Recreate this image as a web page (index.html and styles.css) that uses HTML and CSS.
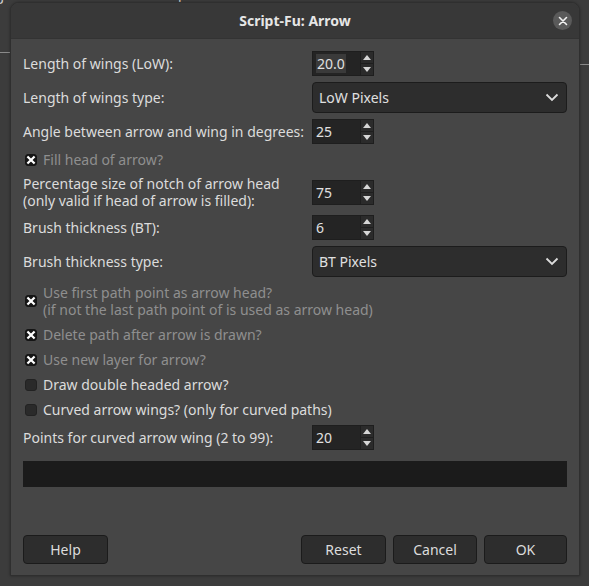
FILE: index.html
```html
<!DOCTYPE html>
<html>
<head>
<meta charset="utf-8">
<link rel="stylesheet" href="styles.css">
</head>
<body>
<div class="backdrop">
  <div class="menubar"><span class="m0">ıg</span><span class="m1">Filters</span><span class="m2">Windows</span><span>Help</span></div>
  <div class="tick tick-left"></div>
  <div class="tick tick-right"></div>
</div>
<div class="dialog">
  <div class="header">
    <div class="title">Script-Fu: Arrow</div>
    <div class="close">
      <svg width="10" height="10" viewBox="0 0 10 10"><path d="M1.5 1.5 L8.5 8.5 M8.5 1.5 L1.5 8.5" stroke="#f2f2f2" stroke-width="1.6" stroke-linecap="round"/></svg>
    </div>
  </div>
  <div class="content">
    <div class="form">
      <div class="label">Length of wings (LoW):</div>
      <div class="ctl"><div class="spin"><div class="entry"><span class="sel">20.0</span></div><div class="btns"><div class="b up"></div><div class="b down"></div></div></div></div>

      <div class="label">Length of wings type:</div>
      <div class="ctl"><div class="combo"><span>LoW Pixels</span><svg width="14" height="9" viewBox="0 0 14 9"><path d="M1.5 1.5 L7 7 L12.5 1.5" fill="none" stroke="#dcdcdc" stroke-width="1.8"/></svg></div></div>

      <div class="label">Angle between arrow and wing in degrees:</div>
      <div class="ctl"><div class="spin"><div class="entry">25</div><div class="btns"><div class="b up"></div><div class="b down"></div></div></div></div>

      <div class="check dim"><span class="box on"></span><span>Fill head of arrow?</span></div>

      <div class="label two"><div class="ln">Percentage size of notch of arrow head</div><div class="ln">(only valid if head of arrow is filled):</div></div>
      <div class="ctl"><div class="spin"><div class="entry">75</div><div class="btns"><div class="b up"></div><div class="b down"></div></div></div></div>

      <div class="label">Brush thickness (BT):</div>
      <div class="ctl"><div class="spin"><div class="entry">6</div><div class="btns"><div class="b up"></div><div class="b down"></div></div></div></div>

      <div class="label">Brush thickness type:</div>
      <div class="ctl"><div class="combo"><span>BT Pixels</span><svg width="14" height="9" viewBox="0 0 14 9"><path d="M1.5 1.5 L7 7 L12.5 1.5" fill="none" stroke="#dcdcdc" stroke-width="1.8"/></svg></div></div>

      <div class="check dim tall"><span class="box on"></span><span class="lines"><span class="ln">Use first path point as arrow head?</span><span class="ln">(if not the last path point of is used as arrow head)</span></span></div>
      <div class="check dim"><span class="box on"></span><span>Delete path after arrow is drawn?</span></div>
      <div class="check dim"><span class="box on"></span><span>Use new layer for arrow?</span></div>
      <div class="check"><span class="box"></span><span>Draw double headed arrow?</span></div>
      <div class="check"><span class="box"></span><span>Curved arrow wings? (only for curved paths)</span></div>

      <div class="label">Points for curved arrow wing (2 to 99):</div>
      <div class="ctl"><div class="spin"><div class="entry">20</div><div class="btns"><div class="b up"></div><div class="b down"></div></div></div></div>
    </div>
    <div class="progress"></div>
    <div class="actions">
      <div class="btn">Help</div>
      <div class="spacer"></div>
      <div class="btn">Reset</div>
      <div class="btn cancel">Cancel</div>
      <div class="btn ok">OK</div>
    </div>
  </div>
</div>
</body>
</html>
```
FILE: styles.css
```css
html, body {
  margin: 0;
  padding: 0;
}
body {
  width: 589px;
  height: 586px;
  overflow: hidden;
  background: #3c3c3c;
  font-family: "Noto Sans", "DejaVu Sans", sans-serif;
  font-size: 14px;
  color: #dcdcdc;
  position: relative;
}
.backdrop {
  position: absolute;
  left: 0;
  top: 0;
  width: 589px;
  height: 586px;
}
.menubar {
  position: absolute;
  left: -8px;
  top: -14px;
  display: flex;
  font-size: 14px;
  color: #cfcfcf;
  line-height: 18px;
}
.m0 { width: 34px; }
.m1 { width: 55px; }
.m2 { width: 75px; }
.tick {
  position: absolute;
  height: 1px;
  width: 10px;
  background: #8a8a8a;
}
.tick-left { left: 0; top: 52px; }
.tick-right { right: 0; top: 64px; width: 9px; }

.dialog {
  position: absolute;
  left: 10px;
  top: 2px;
  width: 568px;
  height: 572px;
  background: #464646;
  border: 1px solid #2f2f2f;
  border-radius: 9px 9px 0 0;
  display: flex;
  flex-direction: column;
  overflow: hidden;
  box-shadow: 0 0 3px rgba(0,0,0,0.35);
}
.header {
  height: 35px;
  flex: none;
  background: #383838;
  border-bottom: 1px solid #333;
  display: flex;
  align-items: center;
  justify-content: center;
  position: relative;
}
.title {
  font-weight: bold;
  font-size: 14px;
  color: #e6e6e6;
}
.close {
  position: absolute;
  right: 7px;
  top: 8px;
  width: 19px;
  height: 19px;
  border-radius: 50%;
  background: #5a5a5a;
  display: flex;
  align-items: center;
  justify-content: center;
}
.content {
  flex: 1;
  display: flex;
  flex-direction: column;
  padding: 12px 12px 11px 12px;
}
.form {
  display: grid;
  grid-template-columns: 279px 255px;
  column-gap: 10px;
  row-gap: 6px;
  align-items: center;
}
.label {
  white-space: nowrap;
  line-height: 17px;
}
.label.two { height: 34px; }
.ln { display: block; height: 17px; line-height: 17px; white-space: nowrap; }
.lines { display: flex; flex-direction: column; }
.ctl { display: flex; align-items: center; }

.spin {
  display: flex;
  height: 25px;
}
.entry {
  width: 44px;
  height: 23px;
  background: #242424;
  border: 1px solid #1e1e1e;
  border-right: none;
  padding-left: 3px;
  line-height: 23px;
  color: #e0e0e0;
}
.sel {
  background: #3a3a3a;
  padding: 0 1px;
}
.btns {
  height: 25px;
  border: 1px solid #1e1e1e;
  box-sizing: border-box;
  width: 14px;
  display: flex;
  flex-direction: column;
  background: #2b2b2b;
}
.b {
  flex: 1;
  position: relative;
}
.b.up { border-bottom: 1px solid #1e1e1e; }
.b::after {
  content: "";
  position: absolute;
  left: 2px;
  width: 0;
  height: 0;
  border-left: 4px solid transparent;
  border-right: 4px solid transparent;
}
.b.up::after {
  top: 3px;
  border-bottom: 5px solid #d6d6d6;
}
.b.down::after {
  top: 3px;
  border-top: 5px solid #d6d6d6;
}

.combo {
  height: 29px;
  background: #2d2d2d;
  border: 1px solid #1c1c1c;
  border-radius: 4px;
  display: flex;
  align-items: center;
  justify-content: space-between;
  padding: 0 7px 0 6px;
  width: 240px;
  color: #e0e0e0;
}

.check {
  grid-column: 1 / 3;
  display: flex;
  align-items: center;
  gap: 6px;
  height: 19px;
  line-height: 17px;
  padding-left: 2px;
}
.check.tall { height: 36px; }
.check.dim { color: #8f8f8f; }
.box {
  width: 12px;
  height: 12px;
  flex: none;
  box-sizing: border-box;
  border-radius: 3px;
  background: #2a2a2a;
  border: 1px solid #222;
}
.box.on {
  background: #151515 url("data:image/svg+xml;utf8,<svg xmlns='http://www.w3.org/2000/svg' width='12' height='12' viewBox='0 0 12 12'><path d='M3.2 3.2 L8.8 8.8 M8.8 3.2 L3.2 8.8' stroke='white' stroke-width='2.2' stroke-linecap='square'/></svg>") center/12px 12px no-repeat;
  border-color: #151515;
}

.progress {
  margin-top: 11px;
  height: 26px;
  background: #1b1b1b;
  width: 544px;
}
.actions {
  margin-top: auto;
  display: flex;
  gap: 7px;
}
.spacer { flex: 1; }
.btn {
  width: 83px;
  height: 27px;
  background: #2d2d2d;
  border: 1px solid #1b1b1b;
  border-radius: 4px;
  display: flex;
  align-items: center;
  justify-content: center;
  color: #dcdcdc;
}
.btn.cancel { width: 82px; }
.btn.ok { width: 81px; }
```
